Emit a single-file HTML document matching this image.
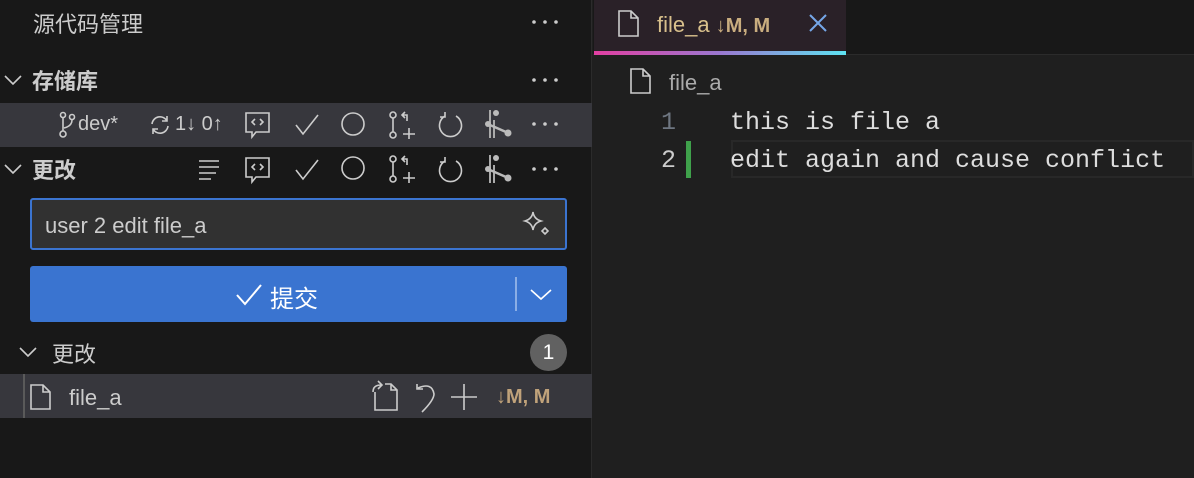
<!DOCTYPE html>
<html><head><meta charset="utf-8"><style>
*{margin:0;padding:0;box-sizing:border-box}
body{width:1194px;height:478px;overflow:hidden;background:#1f1f1f;font-family:"Liberation Sans","Noto Sans CJK SC",sans-serif;color:#ccc;position:relative}
.a{position:absolute}
#side{left:0;top:0;width:592px;height:478px;background:#181818;border-right:1px solid #2b2b2b}
.t{font-size:22px;color:#ccc;white-space:nowrap}
svg{position:absolute;overflow:visible}
.ic{stroke:#ccc;fill:none;stroke-width:1.6}
</style></head><body>
<div id="side" class="a">
 <div class="a t" style="left:33px;top:7px">源代码管理</div>
 <svg style="left:532px;top:20px" width="26" height="4"><circle cx="2" cy="2" r="1.8" fill="#ccc"/><circle cx="13" cy="2" r="1.8" fill="#ccc"/><circle cx="24" cy="2" r="1.8" fill="#ccc"/></svg>
 <svg style="left:4px;top:73px" width="20" height="14"><path class="ic" d="M1 3 L9 11 L17 3"/></svg>
 <div class="a t" style="left:32px;top:64px;font-weight:bold">存储库</div>
 <svg style="left:532px;top:78px" width="26" height="4"><circle cx="2" cy="2" r="1.8" fill="#ccc"/><circle cx="13" cy="2" r="1.8" fill="#ccc"/><circle cx="24" cy="2" r="1.8" fill="#ccc"/></svg>
 <div class="a" style="left:0;top:103px;width:592px;height:44px;background:#37373d"></div>
 <svg style="left:60px;top:112px" width="30" height="26"><circle class="ic" cx="3" cy="22" r="3" stroke-width="1.3"/><circle class="ic" cx="3" cy="3" r="2.5" stroke-width="1.3"/><circle class="ic" cx="12" cy="5" r="2.5" stroke-width="1.3"/><path class="ic" d="M3 6 V19 M12 8 Q12 14 4 16" stroke-width="1.3"/></svg>
 <div class="a t" style="left:78px;top:113px;font-size:20px">dev*</div>
 <svg style="left:149px;top:114px" width="24" height="22"><path class="ic" d="M3 10 A8 8 0 0 1 18 7 M19 12 A8 8 0 0 1 4 15 M18 2 V7 H13 M4 20 V15 H9" stroke-width="1.4"/></svg>
 <div class="a t" style="left:175px;top:113px;font-size:20px">1↓ 0↑</div>
 <svg style="left:245px;top:112px" width="26" height="26"><path class="ic" d="M1 1 H24 V20 H11 L7 25 V20 H1 Z M10 7 L7 10 L10 13 M15 7 L18 10 L15 13"/></svg>
 <svg style="left:294px;top:112px" width="26" height="26"><path class="ic" d="M2 13 L9 22 L24 3"/></svg>
 <svg style="left:340px;top:112px" width="26" height="26"><circle class="ic" cx="13" cy="12" r="11"/></svg>
 <svg style="left:389px;top:111px" width="28" height="28"><circle class="ic" cx="4" cy="4" r="3"/><circle class="ic" cx="4" cy="24" r="3"/><path class="ic" d="M4 7 V21 M20 17 V28 M14 23 H26 M18 10 V4 H13 M16 1 L13 4 L16 7"/></svg>
 <svg style="left:438px;top:112px" width="26" height="26"><path class="ic" d="M7 4 A11 11 0 1 0 18 4 M7 0 V5 H2"/></svg>
 <svg style="left:484px;top:110px" width="28" height="30"><path d="M6 0 V28 M10 10 V28" stroke="#aaa" stroke-width="2"/><circle cx="12" cy="3" r="3" fill="#bbb"/><circle cx="4" cy="14" r="3" fill="#bbb"/><circle cx="24" cy="23" r="3.5" fill="#bbb"/><path d="M6 15 L22 22" stroke="#bbb" stroke-width="2.5"/></svg>
 <svg style="left:532px;top:122px" width="26" height="4"><circle cx="2" cy="2" r="1.8" fill="#ccc"/><circle cx="13" cy="2" r="1.8" fill="#ccc"/><circle cx="24" cy="2" r="1.8" fill="#ccc"/></svg>
 <svg style="left:4px;top:162px" width="20" height="14"><path class="ic" d="M1 3 L9 11 L17 3"/></svg>
 <div class="a t" style="left:32px;top:153px;font-weight:bold">更改</div>
 <svg style="left:198px;top:158px" width="22" height="22"><path class="ic" d="M1 3 H21 M1 9 H21 M1 15 H18 M1 21 H13"/></svg>
 <svg style="left:245px;top:157px" width="26" height="26"><path class="ic" d="M1 1 H24 V20 H11 L7 25 V20 H1 Z M10 7 L7 10 L10 13 M15 7 L18 10 L15 13"/></svg>
 <svg style="left:294px;top:157px" width="26" height="26"><path class="ic" d="M2 13 L9 22 L24 3"/></svg>
 <svg style="left:340px;top:156px" width="26" height="26"><circle class="ic" cx="13" cy="12" r="11"/></svg>
 <svg style="left:389px;top:155px" width="28" height="28"><circle class="ic" cx="4" cy="4" r="3"/><circle class="ic" cx="4" cy="24" r="3"/><path class="ic" d="M4 7 V21 M20 17 V28 M14 23 H26 M18 10 V4 H13 M16 1 L13 4 L16 7"/></svg>
 <svg style="left:438px;top:157px" width="26" height="26"><path class="ic" d="M7 4 A11 11 0 1 0 18 4 M7 0 V5 H2"/></svg>
 <svg style="left:484px;top:155px" width="28" height="30"><path d="M6 0 V28 M10 10 V28" stroke="#aaa" stroke-width="2"/><circle cx="12" cy="3" r="3" fill="#bbb"/><circle cx="4" cy="14" r="3" fill="#bbb"/><circle cx="24" cy="23" r="3.5" fill="#bbb"/><path d="M6 15 L22 22" stroke="#bbb" stroke-width="2.5"/></svg>
 <svg style="left:532px;top:167px" width="26" height="4"><circle cx="2" cy="2" r="1.8" fill="#ccc"/><circle cx="13" cy="2" r="1.8" fill="#ccc"/><circle cx="24" cy="2" r="1.8" fill="#ccc"/></svg>
 <div class="a" style="left:30px;top:198px;width:537px;height:52px;background:#313131;border:2px solid #3b74d0;border-radius:3px"></div>
 <div class="a t" style="left:45px;top:213px;font-size:22px">user 2 edit file_a</div>
 <svg style="left:523px;top:211px" width="28" height="28"><path class="ic" d="M10 1 Q11 8 18 10 Q11 12 10 19 Q9 12 2 10 Q9 8 10 1 Z M22 17 L25 20 L22 23 L19 20 Z" stroke-width="1.5"/></svg>
 <div class="a" style="left:30px;top:266px;width:537px;height:56px;background:#3a74d0;border-radius:3px"></div>
 <svg style="left:236px;top:283px" width="28" height="24"><path d="M1 12 L9 21 L25 2" stroke="#fff" stroke-width="2" fill="none"/></svg>
 <div class="a t" style="left:270px;top:279px;font-size:24px;color:#fff">提交</div>
 <div class="a" style="left:515px;top:277px;width:2px;height:34px;background:#8aaee6"></div>
 <svg style="left:530px;top:288px" width="22" height="14"><path d="M1 2 L11 11 L21 2" stroke="#fff" stroke-width="1.6" fill="none"/></svg>
 <svg style="left:19px;top:345px" width="20" height="14"><path class="ic" d="M1 3 L9 11 L17 3"/></svg>
 <div class="a t" style="left:52px;top:337px">更改</div>
 <div class="a" style="left:530px;top:334px;width:37px;height:37px;border-radius:50%;background:#616161;color:#fff;font-size:21px;text-align:center;line-height:37px">1</div>
 <div class="a" style="left:0;top:374px;width:592px;height:44px;background:#37373d"></div>
 <div class="a" style="left:23px;top:374px;width:2px;height:44px;background:#5a5a5a"></div>
 <svg style="left:30px;top:384px" width="22" height="26"><path class="ic" d="M1 1 H13 L20 8 V25 H1 Z M13 1 V8 H20"/></svg>
 <div class="a t" style="left:69px;top:385px">file_a</div>
 <svg style="left:371px;top:380px" width="28" height="30"><path class="ic" d="M4 12 V30 H26 V10 L20 4 H14 M20 4 V10 H26 M2 12 Q2 5 10 5 M7 1 L11 5 L7 9"/></svg>
 <svg style="left:414px;top:384px" width="24" height="30"><path class="ic" d="M4 4 Q18 -2 20 10 Q20 16 8 28 M3 0 V5 H9"/></svg>
 <svg style="left:451px;top:384px" width="28" height="26"><path class="ic" d="M13 0 V26 M0 13 H26"/></svg>
 <div class="a" style="left:496px;top:386px;font-size:20px;color:#c0a27a;font-weight:bold">↓M, M</div>
</div>
<div class="a" style="left:593px;top:0;width:601px;height:55px;background:#181818;border-bottom:1px solid #2b2b2b"></div>
<div class="a" style="left:594px;top:0;width:252px;height:55px;background:#2a2128"></div>
<div class="a" style="left:594px;top:51px;width:252px;height:4px;background:linear-gradient(90deg,#e23fa2,#9a78d0,#5ee3f2)"></div>
<svg style="left:618px;top:10px" width="22" height="28"><path class="ic" d="M1 1 H13 L20 8 V26 H1 Z M13 1 V8 H20"/></svg>
<div class="a t" style="left:657px;top:12px;color:#d8c08c">file_a <span style="font-size:20px;font-weight:bold;color:#c9ad7f">↓M, M</span></div>
<svg style="left:808px;top:13px" width="20" height="20"><path d="M2 2 L18 18 M18 2 L2 18" stroke="#75a7e8" stroke-width="2"/></svg>
<svg style="left:630px;top:68px" width="22" height="28"><path class="ic" d="M1 1 H13 L20 8 V25 H1 Z M13 1 V8 H20"/></svg>
<div class="a t" style="left:669px;top:70px;color:#aaa">file_a</div>
<div class="a" style="left:731px;top:140px;width:463px;height:38px;border:2px solid #282828"></div>
<div class="a" style="left:686px;top:141px;width:5px;height:37px;background:#3fa14b"></div>
<div class="a" style="font-family:'Liberation Mono',monospace;font-size:25px;left:661px;top:108px;color:#6e7681">1</div>
<div class="a" style="font-family:'Liberation Mono',monospace;font-size:25px;left:661px;top:146px;color:#ccc">2</div>
<div class="a" style="font-family:'Liberation Mono',monospace;font-size:25px;left:730px;top:108px;color:#ddd;white-space:pre">this is file a</div>
<div class="a" style="font-family:'Liberation Mono',monospace;font-size:25px;left:730px;top:146px;color:#ddd;white-space:pre">edit again and cause conflict</div>
</body></html>
